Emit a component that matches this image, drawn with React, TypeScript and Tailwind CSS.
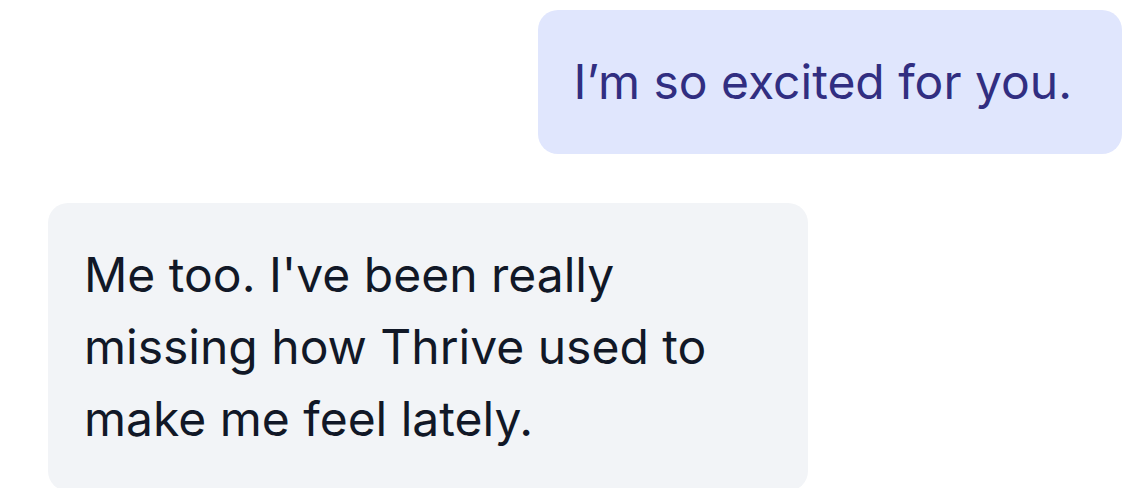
export default function App() {
  return (
    <div className="h-[488px] w-[1125px] overflow-hidden bg-white font-['Inter',sans-serif]">
      <div className="flex flex-col gap-[49px] pt-[10px] pl-[48px] pr-[3px]">
        {/* outgoing */}
        <div className="flex justify-end">
          <div className="rounded-[20px] bg-[#e0e6fd] py-9 pl-9 pr-[50px] text-[48px] leading-[72px] text-[#312e81]">
            I’m so excited for you.
          </div>
        </div>
        {/* incoming */}
        <div className="flex justify-start">
          <div className="w-[760px] rounded-[20px] bg-[#f2f4f7] p-9 text-[48px] leading-[72px] text-[#111827]">
            Me too. I've been really missing how Thrive used to make me feel lately.
          </div>
        </div>
      </div>
    </div>
  );
}
